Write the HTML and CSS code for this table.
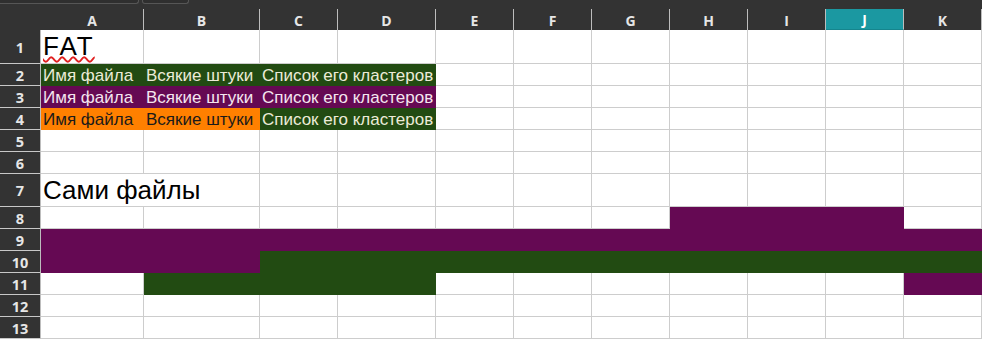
FILE: index.html
```html
<!DOCTYPE html>
<html>
<head>
<meta charset="utf-8">
<link rel="stylesheet" href="styles.css">
</head>
<body>
<div class="topstrip">
  <div class="tb tb1"></div>
  <div class="tb tb2"></div>
</div>
<div class="sheet">
  <!-- header -->
  <div class="corner"></div>
  <div class="ch">A</div><div class="ch">B</div><div class="ch">C</div><div class="ch">D</div>
  <div class="ch">E</div><div class="ch">F</div><div class="ch">G</div><div class="ch">H</div>
  <div class="ch">I</div><div class="ch sel">J</div><div class="ch">K</div>

  <!-- row 1 -->
  <div class="rh big">1</div>
  <div class="c"><div class="title"><span class="fat">FAT</span></div></div>
  <div class="c"></div><div class="c"></div><div class="c"></div><div class="c"></div><div class="c"></div>
  <div class="c"></div><div class="c"></div><div class="c"></div><div class="c"></div><div class="c"></div>

  <!-- row 2 -->
  <div class="rh">2</div>
  <div class="c g t">Имя файла</div>
  <div class="c g t">Всякие штуки</div>
  <div class="c g t s2">Список его кластеров</div>
  <div class="c"></div><div class="c"></div><div class="c"></div><div class="c"></div>
  <div class="c"></div><div class="c"></div><div class="c"></div>

  <!-- row 3 -->
  <div class="rh">3</div>
  <div class="c p t">Имя файла</div>
  <div class="c p t">Всякие штуки</div>
  <div class="c p t s2">Список его кластеров</div>
  <div class="c"></div><div class="c"></div><div class="c"></div><div class="c"></div>
  <div class="c"></div><div class="c"></div><div class="c"></div>

  <!-- row 4 -->
  <div class="rh">4</div>
  <div class="c o t">Имя файла</div>
  <div class="c o t">Всякие штуки</div>
  <div class="c g t s2">Список его кластеров</div>
  <div class="c"></div><div class="c"></div><div class="c"></div><div class="c"></div>
  <div class="c"></div><div class="c"></div><div class="c"></div>

  <!-- row 5 -->
  <div class="rh">5</div>
  <div class="c"></div><div class="c"></div><div class="c"></div><div class="c"></div><div class="c"></div><div class="c"></div>
  <div class="c"></div><div class="c"></div><div class="c"></div><div class="c"></div><div class="c"></div>

  <!-- row 6 -->
  <div class="rh">6</div>
  <div class="c"></div><div class="c"></div><div class="c"></div><div class="c"></div><div class="c"></div><div class="c"></div>
  <div class="c"></div><div class="c"></div><div class="c"></div><div class="c"></div><div class="c"></div>

  <!-- row 7 -->
  <div class="rh big">7</div>
  <div class="c s2"><div class="title">Сами файлы</div></div>
  <div class="c"></div><div class="c"></div><div class="c"></div><div class="c"></div>
  <div class="c"></div><div class="c"></div><div class="c"></div><div class="c"></div><div class="c"></div>

  <!-- row 8 -->
  <div class="rh">8</div>
  <div class="c"></div><div class="c"></div><div class="c"></div><div class="c"></div><div class="c"></div><div class="c"></div><div class="c"></div>
  <div class="c p"></div><div class="c p"></div><div class="c p"></div>
  <div class="c"></div>

  <!-- row 9 -->
  <div class="rh">9</div>
  <div class="c p"></div><div class="c p"></div><div class="c p"></div><div class="c p"></div><div class="c p"></div><div class="c p"></div>
  <div class="c p"></div><div class="c p"></div><div class="c p"></div><div class="c p"></div><div class="c p"></div>

  <!-- row 10 -->
  <div class="rh">10</div>
  <div class="c p"></div><div class="c p"></div>
  <div class="c g"></div><div class="c g"></div><div class="c g"></div><div class="c g"></div><div class="c g"></div>
  <div class="c g"></div><div class="c g"></div><div class="c g"></div><div class="c g"></div>

  <!-- row 11 -->
  <div class="rh">11</div>
  <div class="c"></div>
  <div class="c g"></div><div class="c g"></div><div class="c g"></div>
  <div class="c"></div><div class="c"></div><div class="c"></div><div class="c"></div><div class="c"></div><div class="c"></div>
  <div class="c p"></div>

  <!-- row 12 -->
  <div class="rh">12</div>
  <div class="c"></div><div class="c"></div><div class="c"></div><div class="c"></div><div class="c"></div><div class="c"></div>
  <div class="c"></div><div class="c"></div><div class="c"></div><div class="c"></div><div class="c"></div>

  <!-- row 13 -->
  <div class="rh">13</div>
  <div class="c"></div><div class="c"></div><div class="c"></div><div class="c"></div><div class="c"></div><div class="c"></div>
  <div class="c"></div><div class="c"></div><div class="c"></div><div class="c"></div><div class="c"></div>
</div>
</body>
</html>
```

FILE: styles.css
```css
* { box-sizing: border-box; }
html, body {
  margin: 0;
  padding: 0;
  background: #ffffff;
  overflow: hidden;
}
.topstrip {
  height: 9px;
  background: #333333;
  display: flex;
  gap: 3px;
  align-items: flex-start;
}
.tb {
  height: 4px;
  background: #2f2f2f;
  border: 1px solid #565656;
  border-top: none;
  border-radius: 0 0 3px 3px;
}
.tb1 { width: 141px; margin-left: -2px; }
.tb2 { width: 47px; }

.sheet {
  display: grid;
  grid-template-columns: 41px 103px 116px 78px 98px 78px 78px 78px 78px 78px 78px 78px;
  grid-template-rows: 21px 34px 22px 22px 22px 22px 22px 33px 22px 22px 22px 22px 22px 22px;
  font-family: "Liberation Sans", Arial, sans-serif;
}
.corner {
  background: #333333;
  border-right: 1px solid #333333;
}
.ch {
  background: #333333;
  color: #e6e6e6;
  font-family: "Open Sans", "DejaVu Sans", sans-serif;
  font-weight: 700;
  font-size: 14px;
  display: flex;
  align-items: center;
  justify-content: center;
  border-right: 1px solid #bdbdbd;
  padding-top: 1px;
}
.ch:last-child { border-right: none; }
.ch.sel {
  background: #1b98a1;
  color: #ffffff;
  border-bottom: 1px solid #15858d;
}
.rh {
  background: #333333;
  color: #e6e6e6;
  font-family: "Open Sans", "DejaVu Sans", sans-serif;
  font-weight: 700;
  font-size: 14.5px;
  display: flex;
  align-items: center;
  justify-content: center;
  border-right: 1px solid #bdbdbd;
  border-bottom: 1px solid #c8c8c8;
  padding-top: 1px;
}
.c {
  border-right: 1px solid #cdcdcd;
  border-bottom: 1px solid #cdcdcd;
  background: #ffffff;
  white-space: nowrap;
  overflow: visible;
  position: relative;
}
.s2 { grid-column: span 2; }
.t {
  font-size: 17px;
  line-height: 21px;
  padding-left: 2px;
  padding-top: 1px;
}
.g { background: #224b12; border-color: #224b12; color: #ecebd8; }
.p { background: #650953; border-color: #650953; color: #f4e6ef; }
.o { background: #ff8000; border-color: #ff8000; color: #1a1a1a; }
.title {
  font-size: 26px;
  line-height: 33px;
  padding-left: 2px;
  padding-top: 0;
  color: #000000;
}
.fat {
  text-decoration: underline wavy #e02020;
  text-decoration-thickness: 1.5px;
  text-underline-offset: 1px;
  letter-spacing: 2px;
}
```
